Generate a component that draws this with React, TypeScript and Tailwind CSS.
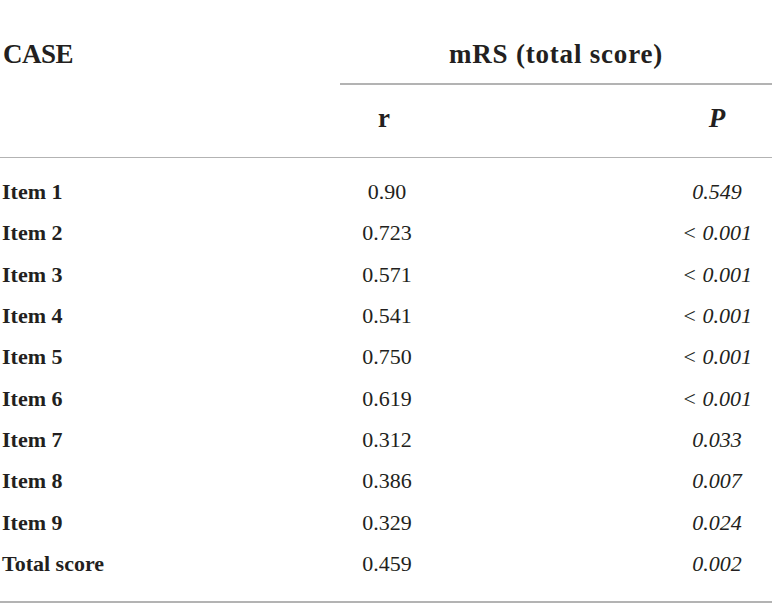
import React from "react";

const rows: [string, string, string][] = [
  ["Item 1", "0.90", "0.549"],
  ["Item 2", "0.723", "< 0.001"],
  ["Item 3", "0.571", "< 0.001"],
  ["Item 4", "0.541", "< 0.001"],
  ["Item 5", "0.750", "< 0.001"],
  ["Item 6", "0.619", "< 0.001"],
  ["Item 7", "0.312", "0.033"],
  ["Item 8", "0.386", "0.007"],
  ["Item 9", "0.329", "0.024"],
  ["Total score", "0.459", "0.002"],
];

export default function App() {
  return (
    <div
      className="w-[772px] h-[604px] bg-white text-[#231f20] text-[22px] leading-[24px] overflow-hidden"
      style={{ fontFamily: '"Liberation Serif", "Times New Roman", serif' }}
    >
      {/* Header */}
      <div className="flex text-[27px]">
        <div className="w-[340px] pl-[3px] pt-[42px] font-bold tracking-[-0.5px]">CASE</div>
        <div className="flex-1 flex flex-col">
          <div className="h-[83px] pt-[42px] text-center font-bold tracking-[0.8px]">mRS (total score)</div>
          <div className="h-[1.5px] bg-[#b3b3b3]" />
          <div className="h-[72px] flex pt-[21px]">
            <div className="w-[88px] text-center font-bold">r</div>
            <div className="flex-1" />
            <div className="w-[110px] text-center font-bold italic">P</div>
          </div>
        </div>
      </div>
      <div className="h-[1.5px] bg-[#b3b3b3]" />
      {/* Body */}
      <div className="pt-[13.5px] pb-[16px]">
        {rows.map(([a, b, c]) => (
          <div key={a} className="flex h-[41.33px] items-center">
            <div className="w-[340px] pl-[2px] font-bold">{a}</div>
            <div className="w-[94px] text-center">{b}</div>
            <div className="flex-1" />
            <div className="w-[110px] text-center italic">{c}</div>
          </div>
        ))}
      </div>
      <div className="h-[2px] bg-[#b3b3b3]" />
    </div>
  );
}
